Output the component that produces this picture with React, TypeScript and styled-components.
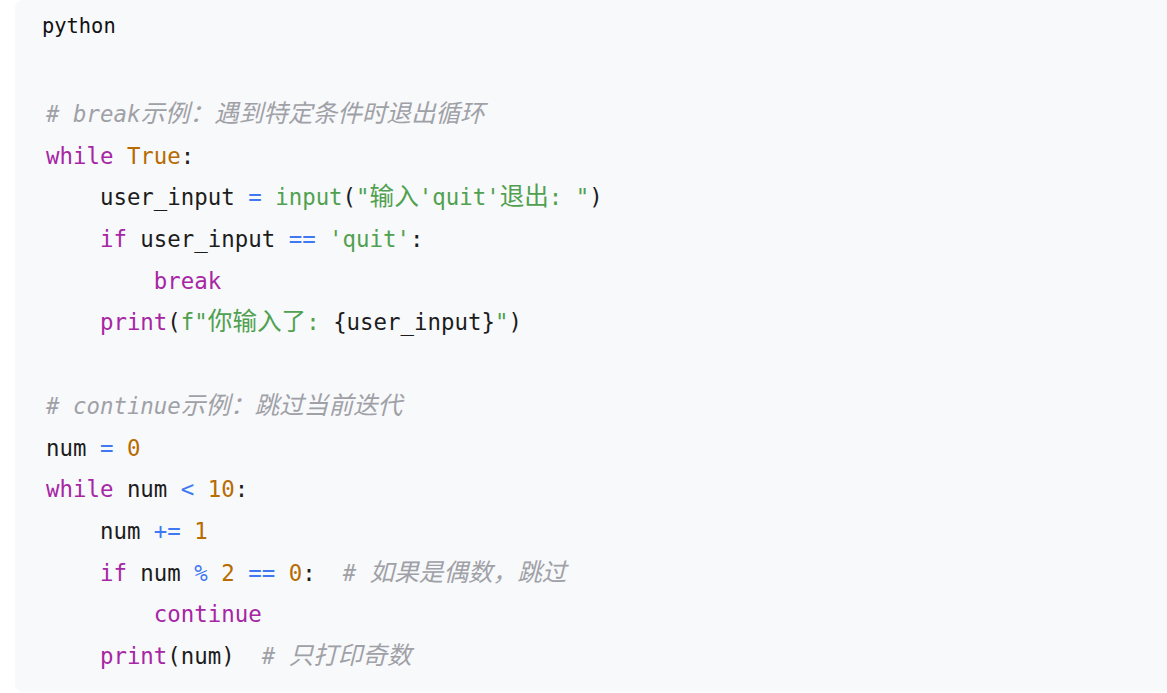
import React from "react";
import styled, { createGlobalStyle } from "styled-components";

const GlobalStyle = createGlobalStyle`
  html, body {
    margin: 0;
    padding: 0;
    background: #ffffff;
    overflow: hidden;
  }
`;

const Page = styled.div`
  display: flex;
  padding-left: 15px;
  width: 1167px;
  height: 693px;
  box-sizing: border-box;
`;

const Card = styled.section`
  flex: 0 0 1180px;
  background: #f8f9fb;
  border-radius: 8px;
  height: 692px;
  box-sizing: border-box;
  display: flex;
  flex-direction: column;
`;

const Header = styled.div`
  padding: 11px 0 0 27px;
  height: 41px;
  box-sizing: border-box;
  font-family: "DejaVu Sans Mono", "Noto Sans CJK SC", monospace;
  font-size: 20.4px;
  line-height: 30px;
  color: #111111;
`;

const Code = styled.pre`
  margin: 0;
  padding: 53px 0 0 31px;
  font-family: "DejaVu Sans Mono", "Noto Sans CJK SC", monospace;
  font-size: 22.4px;
  color: #1c1c1c;
  white-space: pre;
`;

const Line = styled.div`
  height: 41.7px;
  line-height: 41.7px;
`;

const Cjk = styled.span`
  font-family: "Noto Sans CJK SC", sans-serif;
  font-size: 24.6px;
  line-height: 0;
`;

type Kind = "kw" | "num" | "str" | "op" | "com" | "txt";

const colors: Record<Kind, string> = {
  kw: "#a626a4",
  num: "#b76b01",
  str: "#50a14f",
  op: "#4078f2",
  com: "#a0a1a7",
  txt: "#1c1c1c",
};

const Tok = styled.span<{ $kind: Kind }>`
  color: ${(p) => colors[p.$kind]};
  font-style: ${(p) => (p.$kind === "com" ? "italic" : "normal")};
`;

type T = [Kind, string];

const lines: T[][] = [
  [["com", "# break示例：遇到特定条件时退出循环"]],
  [["kw", "while"], ["txt", " "], ["num", "True"], ["txt", ":"]],
  [
    ["txt", "    user_input "],
    ["op", "="],
    ["txt", " "],
    ["str", "input"],
    ["txt", "("],
    ["str", "\"输入'quit'退出: \""],
    ["txt", ")"],
  ],
  [
    ["txt", "    "],
    ["kw", "if"],
    ["txt", " user_input "],
    ["op", "=="],
    ["txt", " "],
    ["str", "'quit'"],
    ["txt", ":"],
  ],
  [["txt", "        "], ["kw", "break"]],
  [
    ["txt", "    "],
    ["kw", "print"],
    ["txt", "("],
    ["str", "f\"你输入了: "],
    ["txt", "{user_input}"],
    ["str", "\""],
    ["txt", ")"],
  ],
  [],
  [["com", "# continue示例：跳过当前迭代"]],
  [["txt", "num "], ["op", "="], ["txt", " "], ["num", "0"]],
  [
    ["kw", "while"],
    ["txt", " num "],
    ["op", "<"],
    ["txt", " "],
    ["num", "10"],
    ["txt", ":"],
  ],
  [["txt", "    num "], ["op", "+="], ["txt", " "], ["num", "1"]],
  [
    ["txt", "    "],
    ["kw", "if"],
    ["txt", " num "],
    ["op", "%"],
    ["txt", " "],
    ["num", "2"],
    ["txt", " "],
    ["op", "=="],
    ["txt", " "],
    ["num", "0"],
    ["txt", ":  "],
    ["com", "# 如果是偶数，跳过"],
  ],
  [["txt", "        "], ["kw", "continue"]],
  [
    ["txt", "    "],
    ["kw", "print"],
    ["txt", "(num)  "],
    ["com", "# 只打印奇数"],
  ],
];

const cjkRe = /([\u3000-\u303f\u4e00-\u9fff\uff00-\uffef]+)/;

function renderText(t: string) {
  return t.split(cjkRe).map((part, i) =>
    i % 2 === 1 ? <Cjk key={i}>{part}</Cjk> : part
  );
}

export default function App() {
  return (
    <>
      <GlobalStyle />
      <Page>
        <Card>
          <Header>python</Header>
          <Code>
            {lines.map((line, i) => (
              <Line key={i}>
                {line.length === 0
                  ? " "
                  : line.map(([k, t], j) => (
                      <Tok key={j} $kind={k}>
                        {renderText(t)}
                      </Tok>
                    ))}
              </Line>
            ))}
          </Code>
        </Card>
      </Page>
    </>
  );
}
